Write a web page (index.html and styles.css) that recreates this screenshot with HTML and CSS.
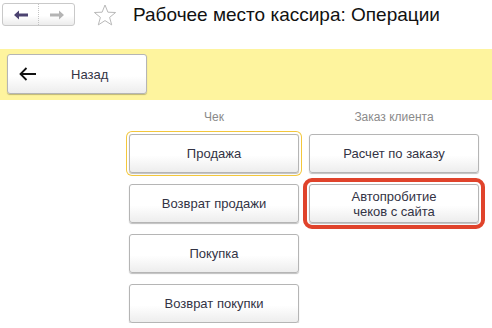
FILE: index.html
```html
<!DOCTYPE html>
<html lang="ru">
<head>
    <meta charset="UTF-8">
    <title>Рабочее место кассира: Операции</title>
    <link rel="stylesheet" href="styles.css">
</head>
<body>
    <div class="top_bar">
        <div class="nav_group">
            <span class="nav_btn">
                <svg width="14" height="10" viewBox="0 0 14 10"><path d="M0 5 L5 0.5 L5 3.5 L14 3.5 L14 6.5 L5 6.5 L5 9.5 Z" fill="#4b4270"/></svg>
            </span>
            <span class="nav_btn">
                <svg width="14" height="10" viewBox="0 0 14 10"><path d="M14 5 L9 0.5 L9 3.5 L0 3.5 L0 6.5 L9 6.5 L9 9.5 Z" fill="#b4b4b4"/></svg>
            </span>
        </div>
        <svg class="star" width="24" height="22" viewBox="0 0 24 22">
            <path d="M12 1 L14.9 8.2 L22.6 8.5 L16.6 13.4 L18.7 20.9 L12 16.6 L5.3 20.9 L7.4 13.4 L1.4 8.5 L9.1 8.2 Z" fill="none" stroke="#b9b9b9" stroke-width="1"/>
        </svg>
        <h1 class="title">Рабочее место кассира: Операции</h1>
    </div>
    <div class="tool_bar">
        <button class="btn back_btn">
            <svg width="18" height="14" viewBox="0 0 18 14"><path d="M1.5 7 H17 M7.5 1 L1.5 7 L7.5 13" fill="none" stroke="#111" stroke-width="1.8"/></svg>
            <span>Назад</span>
        </button>
    </div>
    <div class="ops">
        <div class="ops_col">
            <div class="col_title">Чек</div>
            <button class="btn op_btn focused">Продажа</button>
            <button class="btn op_btn">Возврат продажи</button>
            <button class="btn op_btn">Покупка</button>
            <button class="btn op_btn">Возврат покупки</button>
        </div>
        <div class="ops_col">
            <div class="col_title">Заказ клиента</div>
            <button class="btn op_btn">Расчет по заказу</button>
            <button class="btn op_btn marked">Автопробитие<br>чеков с сайта</button>
        </div>
    </div>
</body>
</html>
```
FILE: styles.css
```css
* {
    margin: 0;
    padding: 0;
    box-sizing: border-box;
}

body {
    background: #fff;
    font-family: "Liberation Sans", Arial, sans-serif;
    color: #333;
}

.top_bar {
    display: flex;
    align-items: flex-start;
    height: 49px;
    padding: 3px 0 0 2px;
}

.nav_group {
    display: flex;
    width: 73px;
    height: 23px;
    border: 1px solid #c9c9c9;
    border-radius: 3px;
    background: linear-gradient(#fff 55%, #ececec);
}

.nav_btn {
    flex: 1;
    display: flex;
    align-items: center;
    justify-content: center;
}

.nav_btn + .nav_btn {
    border-left: 1px dotted #c4c4c4;
}

.star {
    margin: 1px 0 0 18px;
}

.title {
    margin: 1px 0 0 16px;
    font-size: 19px;
    font-weight: normal;
    line-height: 22px;
    color: #111;
}

.tool_bar {
    height: 51px;
    padding: 5px 7px;
    background: #fef49e;
}

.btn {
    font-family: "Liberation Sans", Arial, sans-serif;
    font-size: 13px;
    color: #333344;
    border: 1px solid #b5b5b5;
    border-radius: 3px;
    background: linear-gradient(#fff 55%, #ededed);
    box-shadow: 0 1px 1px rgba(0, 0, 0, 0.25);
}

.back_btn {
    display: flex;
    align-items: center;
    width: 140px;
    height: 40px;
    padding-left: 11px;
}

.back_btn span {
    margin-left: 34px;
}

.ops {
    display: flex;
    gap: 10px;
    padding: 10px 0 0 129px;
}

.ops_col {
    display: flex;
    flex-direction: column;
    gap: 11px;
    width: 170px;
}

.col_title {
    height: 14px;
    margin-bottom: -1px;
    font-size: 12px;
    line-height: 14px;
    text-align: center;
    color: #8a8a8a;
}

.op_btn {
    height: 39px;
    line-height: 15px;
}

.focused {
    box-shadow: 0 1px 1px rgba(0, 0, 0, 0.25), 0 0 0 2px #fff, 0 0 0 3px #f3c73c;
}

.marked {
    outline: 4px solid #e0432b;
    outline-offset: 2px;
}
```
